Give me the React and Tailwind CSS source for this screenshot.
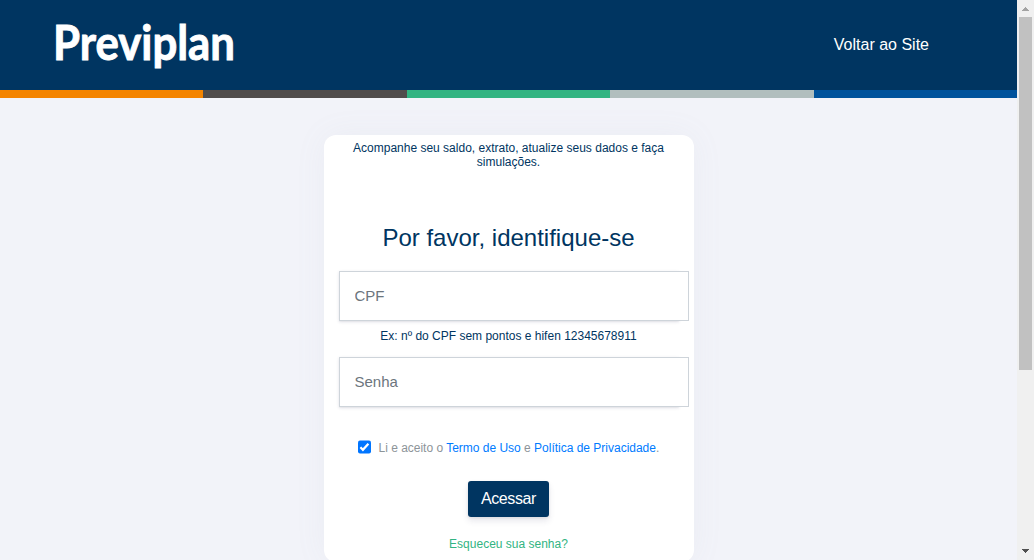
import React from 'react';

const STRIPES = ['bg-[#f48400]', 'bg-[#504c4c]', 'bg-[#32b482]', 'bg-[#b1bebe]', 'bg-[#00529c]'];

function Logo() {
  return (
    <svg className="block" width="260" height="80" viewBox="0 0 260 80" role="img" aria-label="Previplan">
      <text
        x="5"
        y="52"
        fill="#fff"
        stroke="#fff"
        strokeWidth="0.9"
        fontFamily="Lato, sans-serif"
        fontWeight="700"
        fontSize="47"
        textLength="182"
        lengthAdjust="spacingAndGlyphs"
      >
        Previplan
      </text>
    </svg>
  );
}

function Header() {
  return (
    <header>
      <div className="flex h-[90px] items-start justify-between bg-[#003561] pl-12 pr-[88px] pt-2">
        <Logo />
        <a href="#" className="mt-[25px] text-[16px] leading-6 text-white">Voltar ao Site</a>
      </div>
      <div className="grid h-2 grid-cols-5">
        {STRIPES.map((color) => <div key={color} className={color} />)}
      </div>
    </header>
  );
}

function Field({ type, placeholder }) {
  return (
    <div className="h-[50px] w-[340px] shadow-[0_1px_3px_rgba(50,50,93,0.15),0_1px_0_rgba(0,0,0,0.02)]">
      <input
        type={type}
        placeholder={placeholder}
        className="block h-[50px] w-[350px] border border-[#ced4da] bg-white px-[15px] pb-[2px] text-[15px] text-[#003561] outline-none placeholder:text-[#6c757d]"
      />
    </div>
  );
}

function LoginCard() {
  return (
    <main className="mx-auto mt-[37px] flex h-[427px] w-[370px] flex-col rounded-xl bg-white px-[15px] pt-[6px] text-center text-[12px] text-[#003561] shadow-[0_0_32px_rgba(136,152,170,0.07)]">
      <p className="leading-[14px]">Acompanhe seu saldo, extrato, atualize seus dados e faça simulações.</p>
      <h1 className="mt-[54px] text-[24px] leading-[30px]">Por favor, identifique-se</h1>
      <div className="mt-[18px]"><Field type="text" placeholder="CPF" /></div>
      <p className="mt-[6px] h-[30px] leading-[18px]"><span>Ex: nº do CPF sem pontos e hifen 12345678911</span></p>
      <Field type="password" placeholder="Senha" />
      <div className="mt-[32px] flex h-[18px] items-center pl-[19px] leading-[18px] text-[#8d9499]">
        <label className="mr-[8px] flex h-[13px] w-[13px] -translate-y-[1.5px] items-center justify-center rounded-[2px] bg-[#0075ff]">
          <svg width="13" height="13" viewBox="0 0 13 13" fill="none">
            <path d="M2.4 6.8 4.9 9.3 10.4 3.2" stroke="#fff" strokeWidth="2.2" />
          </svg>
        </label>
        <span className="whitespace-nowrap tracking-[-0.01px]">
          Li e aceito o <a href="#" className="text-[#007bff]">Termo de Uso</a> e{' '}
          <a href="#" className="text-[#007bff]">Política de Privacidade</a>.
        </span>
      </div>
      <button className="mx-auto mt-[24px] h-9 w-[81px] shrink-0 rounded-[3px] bg-[#003561] text-[16px] leading-9 tracking-[-0.4px] text-white shadow-[0_4px_6px_rgba(50,50,93,0.11),0_1px_3px_rgba(0,0,0,0.08)]">
        Acessar
      </button>
      <a href="#" className="mt-[18px] leading-[18px] text-[#32b482]">Esqueceu sua senha?</a>
    </main>
  );
}

function Scrollbar() {
  return (
    <div className="flex h-full w-[17px] shrink-0 flex-col items-center justify-between bg-[#f0f0f0]">
      <div className="flex w-full flex-col items-center">
        <svg className="block" width="17" height="17" viewBox="0 0 17 17" shapeRendering="crispEdges">
          <path d="M8 7h1v1h1v1h1v1h1v1H5v-1h1V9h1V8h1z" fill="#a3a3a3" />
        </svg>
        <div className="h-[353px] w-[13px] bg-[#c1c1c1]" />
      </div>
      <svg className="block" width="17" height="17" viewBox="0 0 17 17" shapeRendering="crispEdges">
        <path d="M5 6h7v1h-1v1h-1v1H9v1H8V9H7V8H6V7H5z" fill="#505050" />
      </svg>
    </div>
  );
}

export default function App() {
  return (
    <div className="flex h-[560px] w-[1034px] overflow-hidden bg-[#f2f3f9] font-['Liberation_Sans',Arial,sans-serif]">
      <div className="h-full w-[1017px] overflow-hidden">
        <Header />
        <LoginCard />
      </div>
      <Scrollbar />
    </div>
  );
}
